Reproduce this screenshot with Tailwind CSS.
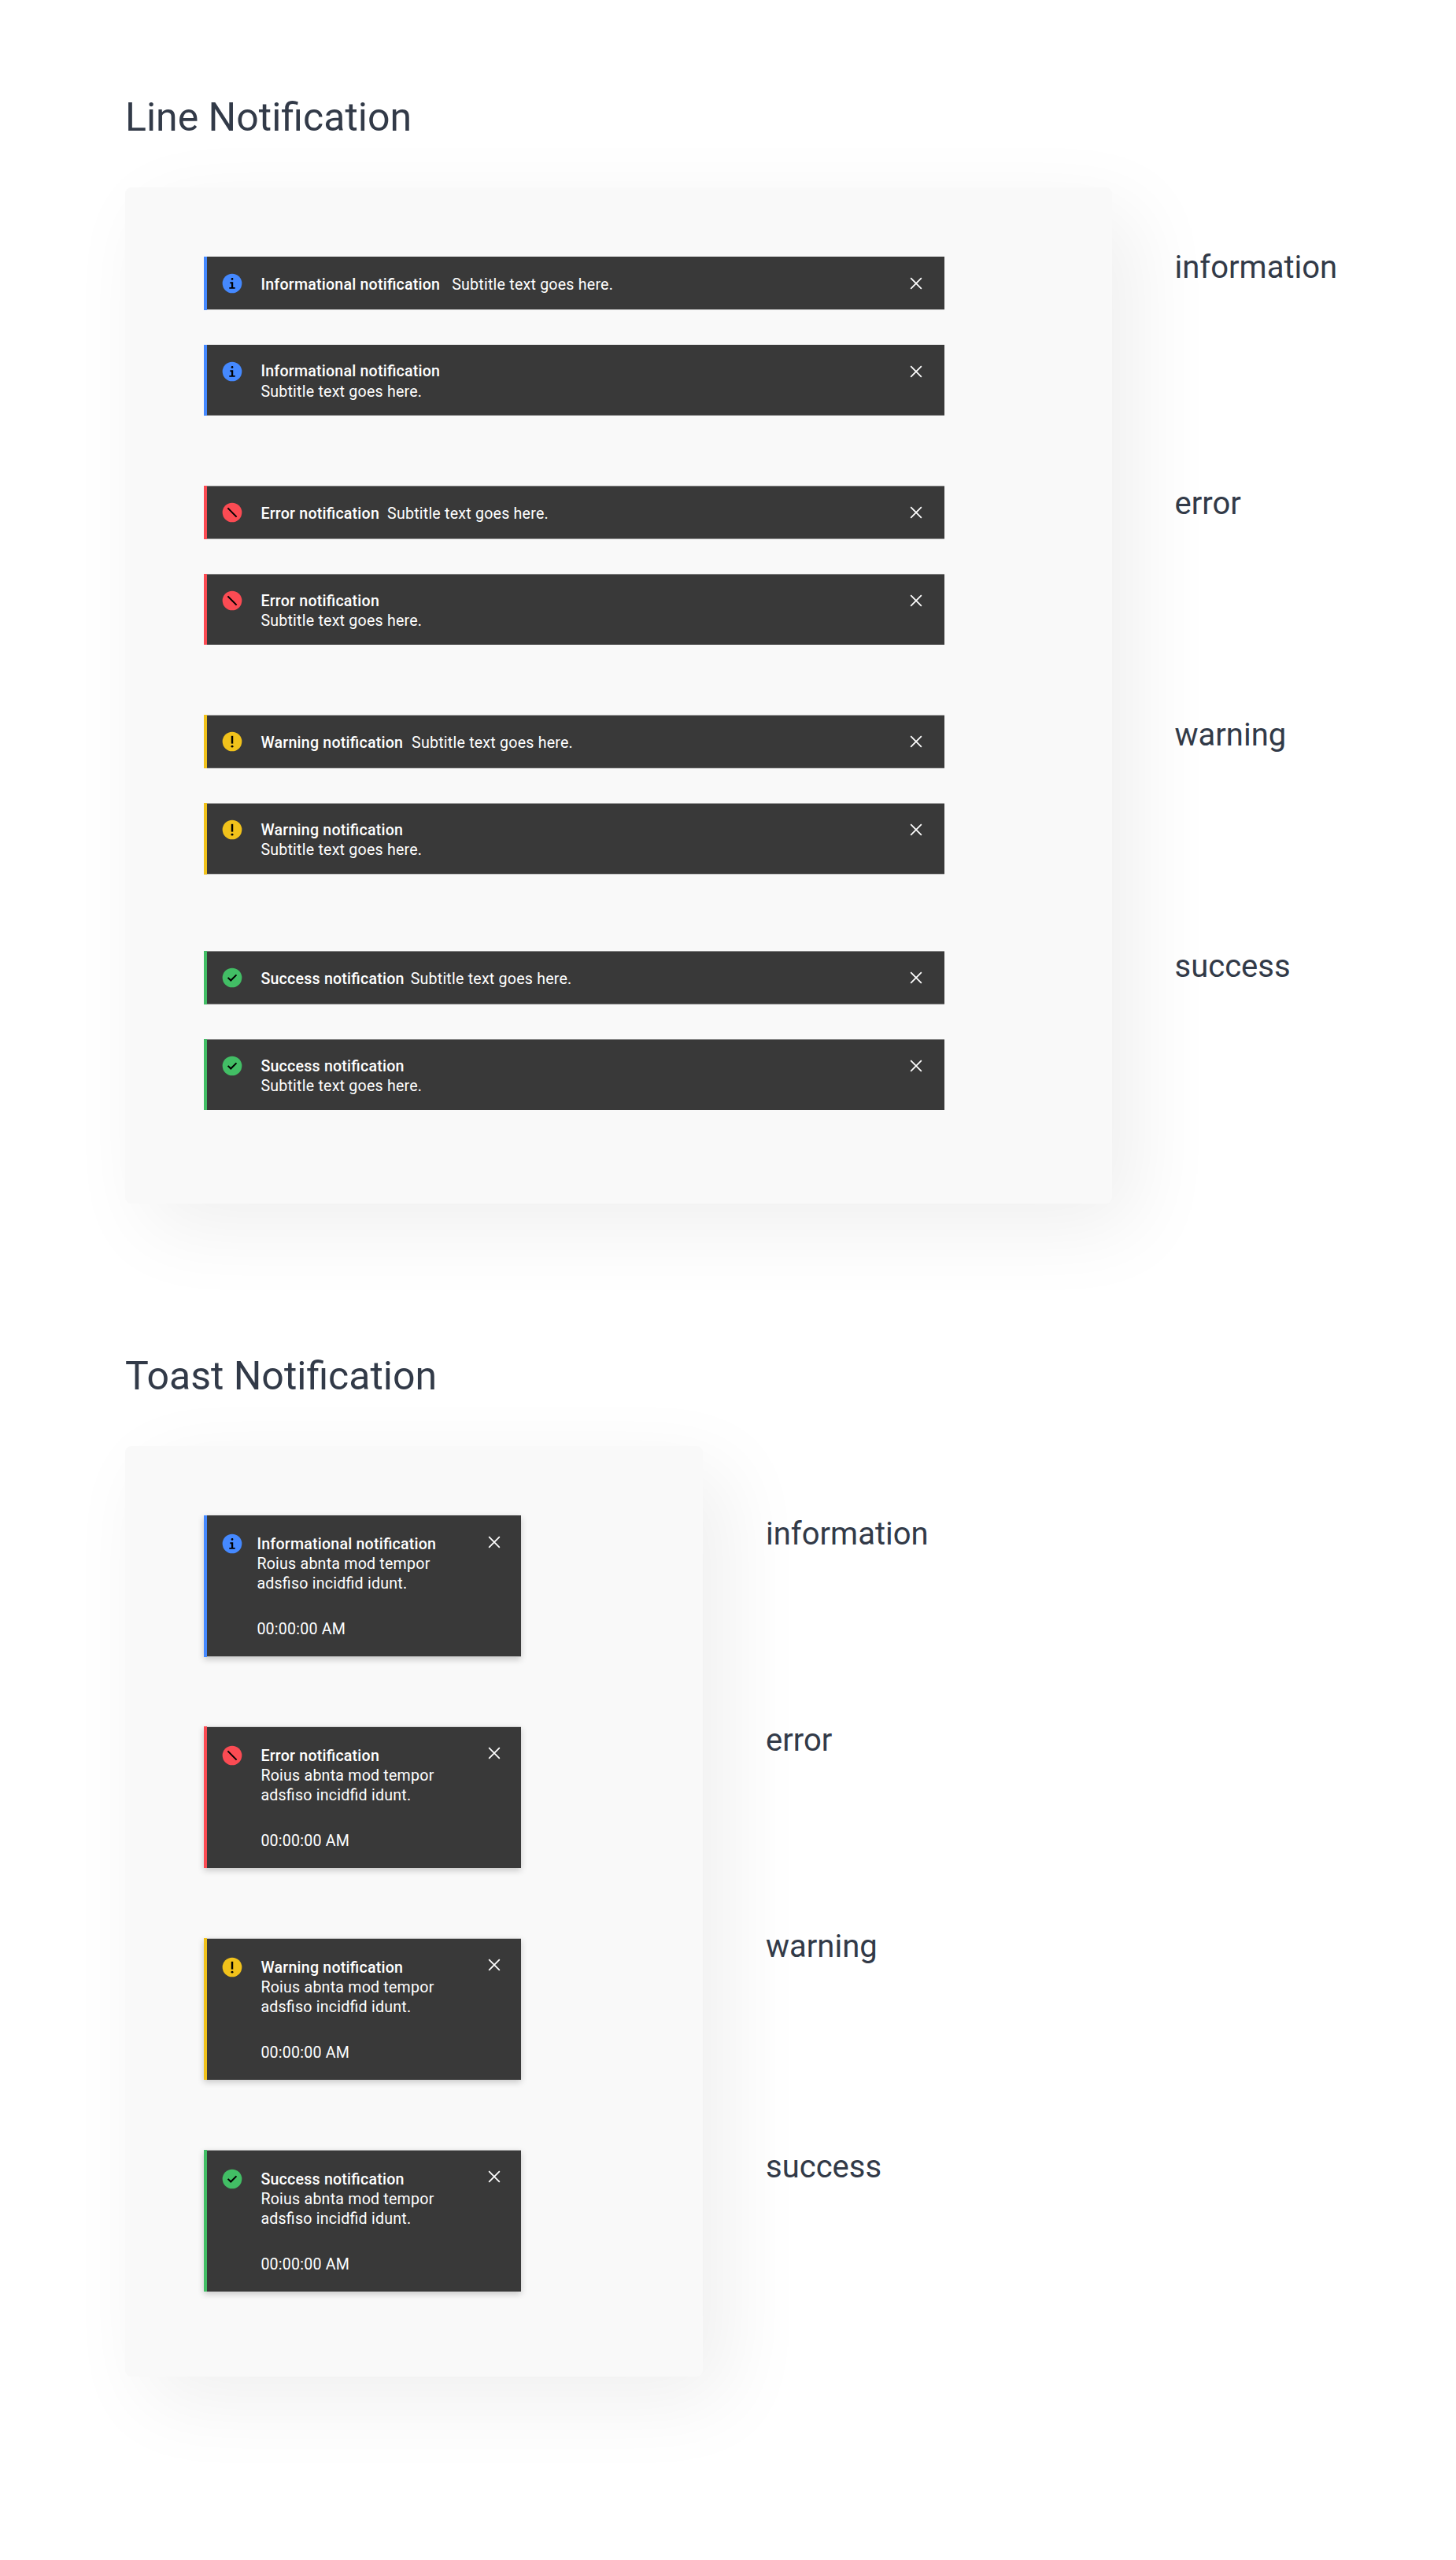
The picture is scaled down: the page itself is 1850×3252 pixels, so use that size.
<!DOCTYPE html>
<html lang="en">
<head>
<meta charset="utf-8">
<title>Notifications</title>
<script src="https://cdn.jsdelivr.net/npm/@tailwindcss/browser@4"></script>
</head>
<body class="bg-white font-[Roboto,sans-serif] text-[#323a48]">
<svg class="hidden">
  <symbol id="info" viewBox="0 0 16 16"><circle cx="8" cy="8" r="7.05" fill="#4589ff"/><path d="M8 4c.4 0 .8.3.8.8s-.4.7-.8.7-.8-.3-.8-.7S7.6 4 8 4zM10.1 11.9H5.9v-1.1h1.5V8.1h-.9V7h2.2v3.8h1.4z" fill="#000"/></symbol>
  <symbol id="error" viewBox="0 0 16 16"><circle cx="8" cy="8" r="7.05" fill="#fb4b53"/><path d="M4.8 4.8l6.4 6.4" stroke="#000" stroke-width="1.15"/></symbol>
  <symbol id="warning" viewBox="0 0 16 16"><circle cx="8" cy="8" r="7.05" fill="#f1c21b"/><path d="M7.3 3.9h1.4v5.6H7.3z" fill="#000"/><circle cx="8" cy="11.5" r=".85" fill="#000"/></symbol>
  <symbol id="success" viewBox="0 0 16 16"><circle cx="8" cy="8" r="7.05" fill="#42be65"/><path d="M7 10.8 4.5 8.3l.8-.8L7 9.2l3.7-3.7.8.8z" fill="#000"/></symbol>
  <symbol id="close" viewBox="0 0 16 16"><path d="M4.1 4.1l7.8 7.8M11.9 4.1l-7.8 7.8" stroke="#fff" stroke-width="1"/></symbol>
</svg>

<main class="h-[3252px] w-[1850px] overflow-hidden pl-[159px] pt-[119px]">
  <section class="h-[1599px]">
    <h1 class="text-[50px] leading-[60px]">Line Notification</h1>
    <div class="mt-[59px] flex">
      <div class="h-[1291px] w-[1254px] rounded-lg bg-[#f9f9f9] pl-[100px] pt-[88px] text-[19.6px] leading-[25px] tracking-[0.22px] text-white shadow-[30px_30px_106px_rgba(0,0,0,0.065)] [font-feature-settings:'liga']">
        <div class="flex h-[68px] w-[941px]">
          <div class="w-1 bg-[#4589ff]"></div>
          <div class="flex flex-1 items-start border-b border-[#393939]/20 bg-[#393939] bg-clip-padding pl-[18.4px] pr-[22.4px] pt-[19.5px]">
            <svg class="size-7 shrink-0"><use href="#info"/></svg>
            <p class="ml-[22px] mt-[3.5px] flex-1"><b class="mr-[15px] font-medium">Informational notification</b>Subtitle text goes here.</p>
            <svg class="size-7 shrink-0"><use href="#close"/></svg>
          </div>
        </div>
        <div class="mt-[44px] flex h-[90px] w-[941px]">
          <div class="w-1 bg-[#4589ff]"></div>
          <div class="flex flex-1 items-start border-b border-[#393939]/70 bg-[#393939] bg-clip-padding pl-[18.4px] pr-[22.4px] pt-[19.5px]">
            <svg class="size-7 shrink-0"><use href="#info"/></svg>
            <p class="ml-[22px] mt-[1.5px] flex-1"><b class="block font-medium leading-[26px]">Informational notification</b>Subtitle text goes here.</p>
            <svg class="size-7 shrink-0"><use href="#close"/></svg>
          </div>
        </div>

        <div class="mt-[89px] flex h-[68px] w-[941px]">
          <div class="w-1 bg-[#fb4b53]"></div>
          <div class="flex flex-1 items-start border-y border-t-[#393939]/60 border-b-[#393939]/50 bg-[#393939] bg-clip-padding pl-[18.4px] pr-[22.4px] pt-[19px]">
            <svg class="size-7 shrink-0"><use href="#error"/></svg>
            <p class="ml-[22px] mt-[3px] flex-1"><b class="mr-[10px] font-medium">Error notification</b>Subtitle text goes here.</p>
            <svg class="size-7 shrink-0"><use href="#close"/></svg>
          </div>
        </div>
        <div class="mt-[44px] flex h-[90px] w-[941px]">
          <div class="w-1 bg-[#fb4b53]"></div>
          <div class="flex flex-1 items-start border-t border-[#393939]/60 bg-[#393939] bg-clip-padding pl-[18.4px] pr-[22.4px] pt-[19px]">
            <svg class="size-7 shrink-0"><use href="#error"/></svg>
            <p class="ml-[22px] mt-[2px] flex-1"><b class="block font-medium">Error notification</b>Subtitle text goes here.</p>
            <svg class="size-7 shrink-0"><use href="#close"/></svg>
          </div>
        </div>

        <div class="mt-[89px] flex h-[68px] w-[941px]">
          <div class="w-1 bg-[#f1c21b]"></div>
          <div class="flex flex-1 items-start border-y border-t-[#393939]/40 border-b-[#393939]/80 bg-[#393939] bg-clip-padding pl-[18.4px] pr-[22.4px] pt-[19px]">
            <svg class="size-7 shrink-0"><use href="#warning"/></svg>
            <p class="ml-[22px] mt-[3px] flex-1"><b class="mr-[11px] font-medium">Warning notification</b>Subtitle text goes here.</p>
            <svg class="size-7 shrink-0"><use href="#close"/></svg>
          </div>
        </div>
        <div class="mt-[44px] flex h-[91px] w-[941px]">
          <div class="w-1 bg-[#f1c21b]"></div>
          <div class="flex flex-1 items-start border-y border-t-[#393939]/40 border-b-[#393939]/30 bg-[#393939] bg-clip-padding pl-[18.4px] pr-[22.4px] pt-[19px]">
            <svg class="size-7 shrink-0"><use href="#warning"/></svg>
            <p class="ml-[22px] mt-[2px] flex-1"><b class="block font-medium">Warning notification</b>Subtitle text goes here.</p>
            <svg class="size-7 shrink-0"><use href="#close"/></svg>
          </div>
        </div>

        <div class="mt-[97px] flex h-[68px] w-[941px]">
          <div class="w-1 bg-[#42be65]"></div>
          <div class="flex flex-1 items-start border-y border-t-[#393939]/60 border-b-[#393939]/60 bg-[#393939] bg-clip-padding pl-[18.4px] pr-[22.4px] pt-[19px]">
            <svg class="size-7 shrink-0"><use href="#success"/></svg>
            <p class="ml-[22px] mt-[3px] flex-1"><b class="mr-[8px] font-medium">Success notification</b>Subtitle text goes here.</p>
            <svg class="size-7 shrink-0"><use href="#close"/></svg>
          </div>
        </div>
        <div class="mt-[44px] flex h-[90px] w-[941px]">
          <div class="w-1 bg-[#42be65]"></div>
          <div class="flex flex-1 items-start border-t border-[#393939]/60 bg-[#393939] bg-clip-padding pl-[18.4px] pr-[22.4px] pt-[19px]">
            <svg class="size-7 shrink-0"><use href="#success"/></svg>
            <p class="ml-[22px] mt-[2px] flex-1"><b class="block font-medium">Success notification</b>Subtitle text goes here.</p>
            <svg class="size-7 shrink-0"><use href="#close"/></svg>
          </div>
        </div>
      </div>
      <div class="relative ml-[79.5px] pt-[78px] text-[40px] leading-[48px]">
        <p>information</p>
        <p class="mt-[252px]">error</p>
        <p class="mt-[246px]">warning</p>
        <p class="mt-[246px]">success</p>
      </div>
    </div>
  </section>

  <section>
    <h1 class="text-[50px] leading-[60px]">Toast Notification</h1>
    <div class="mt-[59px] flex">
      <div class="h-[1182px] w-[734px] rounded-lg bg-[#f9f9f9] pl-[100px] pt-[88px] text-[19.6px] leading-[25px] tracking-[0.22px] text-white shadow-[30px_30px_106px_rgba(0,0,0,0.065)] [font-feature-settings:'liga']">
        <div class="flex h-[180px] w-[403px] shadow-[0_3px_8px_rgba(0,0,0,0.2)]">
          <div class="w-1 bg-[#4589ff]"></div>
          <div class="flex flex-1 items-start border-b border-[#393939]/30 bg-[#393939] bg-clip-padding pl-[18.4px] pr-[19.6px] pt-[20px]">
            <svg class="mt-[2.4px] size-7 shrink-0"><use href="#info"/></svg>
            <div class="ml-[17px] mt-[4px] flex-1">
              <b class="block font-medium">Informational notification</b>
              <p>Roius abnta mod tempor<br>adsfiso incidfid idunt.</p>
              <p class="mt-[33px]">00:00:00 AM</p>
            </div>
            <svg class="size-7 shrink-0"><use href="#close"/></svg>
          </div>
        </div>
        <div class="mt-[88px] flex h-[180px] w-[403px] shadow-[0_3px_8px_rgba(0,0,0,0.2)]">
          <div class="w-1 bg-[#fb4b53]"></div>
          <div class="flex flex-1 items-start border-t border-[#393939]/20 bg-[#393939] bg-clip-padding pl-[18.4px] pr-[19.6px] pt-[19.4px]">
            <svg class="mt-[3px] size-7 shrink-0"><use href="#error"/></svg>
            <div class="ml-[22px] mt-[4.6px] flex-1">
              <b class="block font-medium">Error notification</b>
              <p>Roius abnta mod tempor<br>adsfiso incidfid idunt.</p>
              <p class="mt-[33px]">00:00:00 AM</p>
            </div>
            <svg class="size-7 shrink-0"><use href="#close"/></svg>
          </div>
        </div>
        <div class="mt-[89px] flex h-[180px] w-[403px] shadow-[0_3px_8px_rgba(0,0,0,0.2)]">
          <div class="w-1 bg-[#f1c21b]"></div>
          <div class="flex flex-1 items-start border-t border-[#393939]/30 bg-[#393939] bg-clip-padding pl-[18.4px] pr-[19.6px] pt-[19.4px]">
            <svg class="mt-[3px] size-7 shrink-0"><use href="#warning"/></svg>
            <div class="ml-[22px] mt-[4.6px] flex-1">
              <b class="block font-medium">Warning notification</b>
              <p>Roius abnta mod tempor<br>adsfiso incidfid idunt.</p>
              <p class="mt-[33px]">00:00:00 AM</p>
            </div>
            <svg class="size-7 shrink-0"><use href="#close"/></svg>
          </div>
        </div>
        <div class="mt-[89px] flex h-[180px] w-[403px] shadow-[0_3px_8px_rgba(0,0,0,0.2)]">
          <div class="w-1 bg-[#42be65]"></div>
          <div class="flex flex-1 items-start border-t border-[#393939]/40 bg-[#393939] bg-clip-padding pl-[18.4px] pr-[19.6px] pt-[19.4px]">
            <svg class="mt-[3px] size-7 shrink-0"><use href="#success"/></svg>
            <div class="ml-[22px] mt-[4.6px] flex-1">
              <b class="block font-medium">Success notification</b>
              <p>Roius abnta mod tempor<br>adsfiso incidfid idunt.</p>
              <p class="mt-[33px]">00:00:00 AM</p>
            </div>
            <svg class="size-7 shrink-0"><use href="#close"/></svg>
          </div>
        </div>
      </div>
      <div class="relative ml-[80px] pt-[88px] text-[40px] leading-[48px]">
        <p>information</p>
        <p class="mt-[214px]">error</p>
        <p class="mt-[214px]">warning</p>
        <p class="mt-[232px]">success</p>
      </div>
    </div>
  </section>
</main>
</body>
</html>
